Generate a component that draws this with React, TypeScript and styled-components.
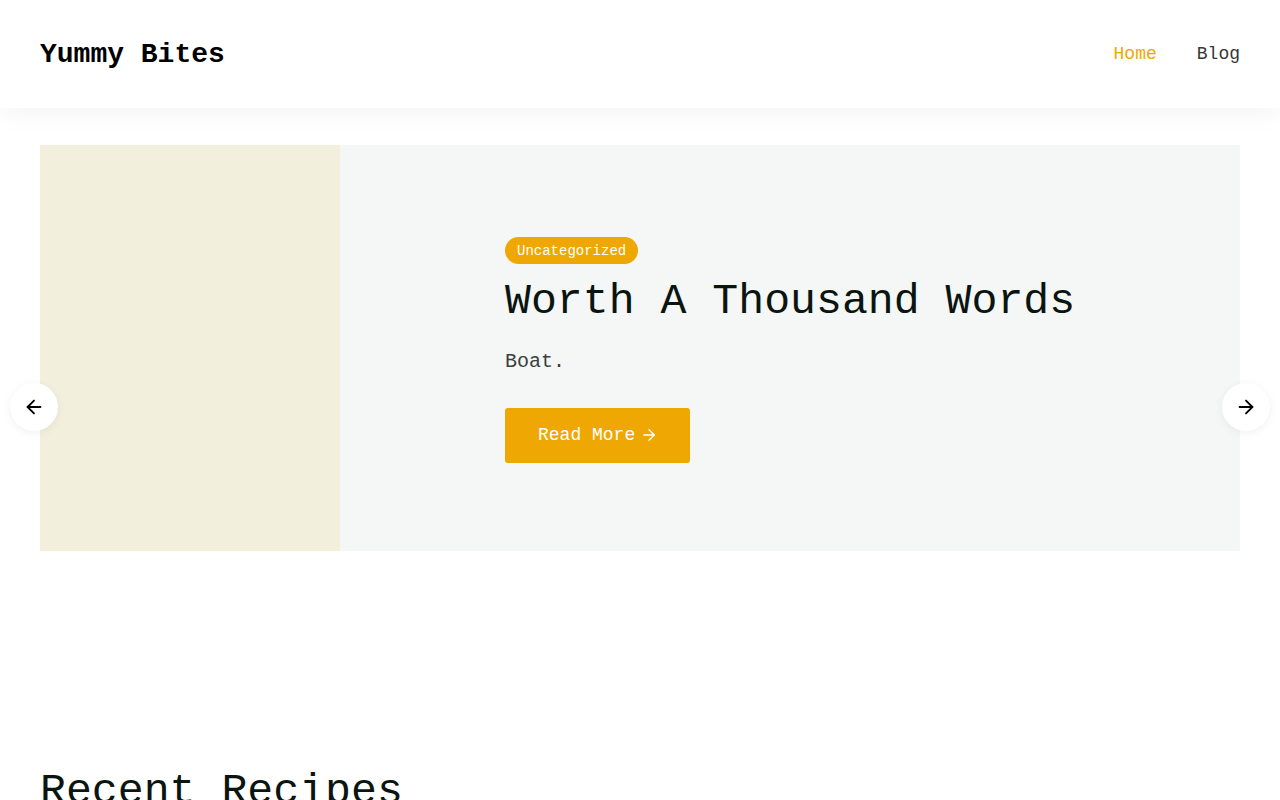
import React from "react";
import styled, {createGlobalStyle} from "styled-components";
import {ArrowLeft, ArrowRight} from "lucide-react";

const GlobalStyle = createGlobalStyle`
  * {
    box-sizing: border-box;
  }
  body {
    margin: 0;
    background: #ffffff;
    font-family: "Liberation Mono", "Courier New", monospace;
    color: #0b1510;
    overflow: hidden;
  }
`

const Header = styled.header`
  height: 108px;
  padding: 0 40px;
  display: flex;
  align-items: center;
  justify-content: space-between;
  background: #ffffff;
  box-shadow: 0 6px 24px rgba(0, 0, 0, 0.045);
  position: relative;
  z-index: 2;
`

const Logo = styled.a`
  font-size: 28px;
  font-weight: 700;
  color: #000000;
  text-decoration: none;
`

const Nav = styled.nav`
  display: flex;
  gap: 40px;
`

const NavLink = styled.a<{ $active?: boolean }>`
  font-size: 18px;
  color: ${props => props.$active ? '#efa703' : '#333836'};
  text-decoration: none;
`

const SliderWrap = styled.section`
  position: relative;
  margin: 37px 40px 0;
`

const Slide = styled.div`
  display: flex;
  height: 406px;
`

const ImagePane = styled.div`
  width: 300px;
  flex-shrink: 0;
  background: #f2efdc;
`

const ContentPane = styled.div`
  flex: 1;
  background: #f4f7f6;
  display: flex;
  flex-direction: column;
  justify-content: flex-start;
  align-items: flex-start;
  padding: 92px 0 0 165px;
`

const Badge = styled.span`
  display: inline-flex;
  align-items: center;
  height: 27px;
  padding: 0 12px;
  border-radius: 14px;
  background: #efa703;
  color: #ffffff;
  font-size: 14px;
`

const Title = styled.h2`
  margin: 12px 0 0;
  font-size: 43.2px;
  font-weight: 400;
  line-height: 1.2;
  color: #0b1510;
`

const Excerpt = styled.p`
  margin: 19px 0 0;
  font-size: 20px;
  line-height: 30px;
  color: #3a3f3c;
`

const ReadMore = styled.a`
  margin-top: 31px;
  height: 55px;
  padding: 0 32px 0 33px;
  display: inline-flex;
  align-items: center;
  gap: 5px;
  background: #efa703;
  color: #ffffff;
  font-size: 18px;
  border-radius: 3px;
  text-decoration: none;
`

const ArrowButton = styled.button<{ $side: 'left' | 'right' }>`
  position: absolute;
  top: 238px;
  ${props => props.$side === 'left' ? 'left: -30px;' : 'right: -30px;'}
  width: 48px;
  height: 48px;
  border-radius: 50%;
  border: none;
  background: #ffffff;
  box-shadow: 0 2px 10px rgba(0, 0, 0, 0.06);
  display: flex;
  align-items: center;
  justify-content: center;
  color: #000000;
  padding: 0;
  cursor: pointer;
`

const Recent = styled.section`
  padding: 0 40px;
  margin-top: 215px;
`

const SectionTitle = styled.h2`
  margin: 0;
  font-size: 43.2px;
  font-weight: 400;
  line-height: 1.2;
  color: #0b1510;
`

export default function App() {
    return (
        <>
            <GlobalStyle/>
            <Header>
                <Logo href="#">Yummy Bites</Logo>
                <Nav>
                    <NavLink href="#" $active>Home</NavLink>
                    <NavLink href="#">Blog</NavLink>
                </Nav>
            </Header>
            <SliderWrap>
                <Slide>
                    <ImagePane/>
                    <ContentPane>
                        <Badge>Uncategorized</Badge>
                        <Title>Worth A Thousand Words</Title>
                        <Excerpt>Boat.</Excerpt>
                        <ReadMore href="#">
                            Read More
                            <ArrowRight size={18} strokeWidth={1.8}/>
                        </ReadMore>
                    </ContentPane>
                </Slide>
                <ArrowButton $side="left" aria-label="Previous">
                    <ArrowLeft size={22} strokeWidth={2}/>
                </ArrowButton>
                <ArrowButton $side="right" aria-label="Next">
                    <ArrowRight size={22} strokeWidth={2}/>
                </ArrowButton>
            </SliderWrap>
            <Recent>
                <SectionTitle>Recent Recipes</SectionTitle>
            </Recent>
        </>
    )
}
